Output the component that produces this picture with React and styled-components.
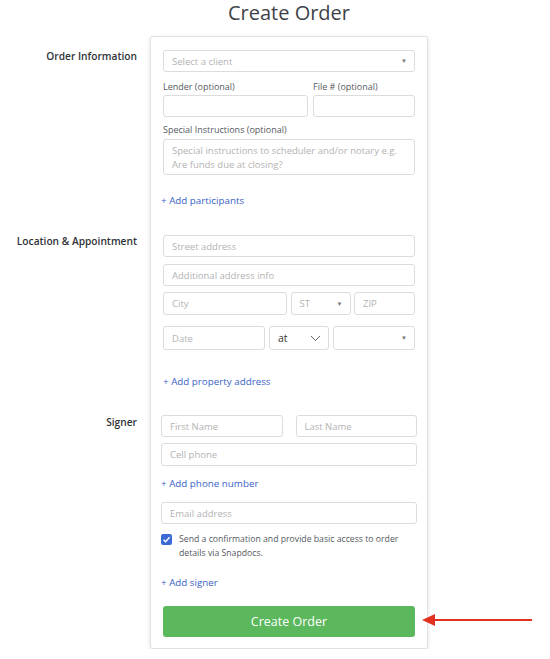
import { styled, createGlobalStyle } from 'styled-components'

const GlobalStyle = createGlobalStyle`
  body {
    margin: 0;
    background: #ffffff;
    font-family: "Open Sans", "Liberation Sans", sans-serif;
    color: #333;
  }
  * { box-sizing: border-box; }
`

const colors = {
  border: '#dcdcdc',
  placeholder: '#b3b3b3',
  link: '#3a5fc6',
  label: '#555a5f',
  green: '#5cb85c',
  blue: '#3d6bd6',
}

const Page = styled.div`
  display: grid;
  grid-template-columns: 150px 278px;
  grid-template-rows: 36px auto auto auto;
  width: 550px;
`
const PageTitle = styled.h1`
  grid-column: 2;
  grid-row: 1;
  margin: 0;
  text-align: center;
  font-size: 20px;
  font-weight: 400;
  line-height: 26px;
  color: #3d4248;
`
const CardBack = styled.div`
  grid-column: 2;
  grid-row: 2 / 5;
  background: #fff;
  border: 1px solid #e2e2e2;
  border-radius: 3px;
  box-shadow: 0 1px 4px rgba(0, 0, 0, 0.12);
`
const SectionLabel = styled.div`
  grid-column: 1;
  grid-row: ${(p) => p.$row};
  padding: ${(p) => p.$top}px 13px 0 0;
  text-align: right;
  font-size: 10.2px;
  font-weight: 600;
  line-height: 14px;
  color: #2f3337;
`
const Section = styled.div`
  grid-column: 2;
  grid-row: ${(p) => p.$row};
  display: flex;
  flex-direction: column;
  align-items: flex-start;
  padding: ${(p) => p.$top}px ${(p) => p.$px}px ${(p) => p.$bottom}px;
  position: relative;
`
const FieldLabel = styled.div`
  font-size: 9px;
  line-height: 14px;
  color: ${colors.label};
  margin-top: ${(p) => p.$mt || 0}px;
`
const Row = styled.div`
  display: flex;
  align-self: stretch;
  gap: ${(p) => p.$gap || 4}px;
  margin-top: ${(p) => p.$mt || 0}px;
`
const Col = styled.div`
  display: flex;
  flex-direction: column;
  width: ${(p) => p.$w ? `${p.$w}px` : 'auto'};
  flex: ${(p) => p.$w ? 'none' : '1'};
`
const Input = styled.input`
  display: block;
  align-self: stretch;
  width: ${(p) => p.$w ? `${p.$w}px` : 'auto'};
  flex: ${(p) => p.$grow ? '1 1 0' : 'none'};
  min-width: 0;
  height: ${(p) => p.$h || 22}px;
  margin: ${(p) => p.$mt || 0}px 0 0;
  padding: 0 8px;
  border: 1px solid ${colors.border};
  border-radius: 3px;
  font-family: inherit;
  font-size: 9.5px;
  color: #333;
  background: #fff;
  &::placeholder { color: ${colors.placeholder}; }
`
const TextArea = styled.textarea`
  display: block;
  align-self: stretch;
  height: 36px;
  margin-top: 2px;
  padding: 4px 8px;
  border: 1px solid ${colors.border};
  border-radius: 3px;
  font-family: inherit;
  font-size: 9.5px;
  line-height: 14px;
  resize: none;
  overflow: hidden;
  &::placeholder { color: ${colors.placeholder}; }
`
const SelectBox = styled.div`
  display: flex;
  align-items: center;
  justify-content: space-between;
  align-self: stretch;
  width: ${(p) => p.$w ? `${p.$w}px` : 'auto'};
  flex: none;
  height: ${(p) => p.$h || 22}px;
  margin-top: ${(p) => p.$mt || 0}px;
  padding: 0 7px 0 8px;
  border: 1px solid ${colors.border};
  border-radius: 3px;
  font-size: ${(p) => p.$dark ? '10.5px' : '9.5px'};
  color: ${(p) => p.$dark ? '#333' : colors.placeholder};
  background: #fff;
`
const Caret = styled.span`
  font-size: 6px;
  color: #777;
`
const AddLink = styled.a`
  font-size: 9.8px;
  line-height: 16px;
  color: ${colors.link};
  text-decoration: none;
  margin-top: ${(p) => p.$mt || 0}px;
  margin-left: ${(p) => p.$ml ?? -2}px;
`
const CheckRow = styled.label`
  display: flex;
  gap: 7px;
  margin-top: 8px;
  font-size: 8.7px;
  line-height: 14px;
  color: ${colors.label};
`
const CheckBox = styled.span`
  flex: none;
  width: 11px;
  height: 11px;
  margin-top: 2px;
  border-radius: 2px;
  background: ${colors.blue};
  display: flex;
  align-items: center;
  justify-content: center;
`
const ButtonRow = styled.div`
  position: relative;
  align-self: stretch;
  margin: 15px 2px 0;
`
const SubmitButton = styled.button`
  display: block;
  width: 100%;
  height: 31px;
  border: none;
  border-radius: 3px;
  background: ${colors.green};
  color: #fff;
  font-family: inherit;
  font-size: 12.5px;
`
const Arrow = styled.svg`
  position: absolute;
  left: calc(100% + 7px);
  top: 7px;
`

function Chevron() {
  return (
    <svg width="11" height="7" viewBox="0 0 11 7">
      <polyline points="1,1 5.5,5.5 10,1" fill="none" stroke="#666" strokeWidth="1" />
    </svg>
  )
}

function CreateOrder() {
  return (
    <Page>
      <PageTitle>Create Order</PageTitle>
      <CardBack />

      <SectionLabel $row={2} $top={13}>Order Information</SectionLabel>
      <Section $row={2} $top={14} $bottom={11} $px={13}>
        <SelectBox>
          <span>Select a client</span>
          <Caret>▼</Caret>
        </SelectBox>
        <Row $gap={5} $mt={8}>
          <Col>
            <FieldLabel>Lender (optional)</FieldLabel>
            <Input $mt={1} />
          </Col>
          <Col $w={102}>
            <FieldLabel>File # (optional)</FieldLabel>
            <Input $mt={1} />
          </Col>
        </Row>
        <FieldLabel $mt={6}>Special Instructions (optional)</FieldLabel>
        <TextArea placeholder={'Special instructions to scheduler and/or notary e.g.\nAre funds due at closing?'} />
        <AddLink $mt={18}>+ Add participants</AddLink>
      </Section>

      <SectionLabel $row={3} $top={14}>Location &amp; Appointment</SectionLabel>
      <Section $row={3} $top={15} $bottom={11} $px={13}>
        <Input placeholder="Street address" />
        <Input placeholder="Additional address info" $mt={7} />
        <Row $gap={3.5} $mt={6}>
          <Input placeholder="City" $h={23} $grow />
          <SelectBox $w={60} $h={23}>
            <span>ST</span>
            <Caret>▼</Caret>
          </SelectBox>
          <Input placeholder="ZIP" $w={61} $h={23} />
        </Row>
        <Row $gap={4} $mt={11}>
          <Input placeholder="Date" $h={24} $grow />
          <SelectBox $w={60} $h={24} $dark>
            <span>at</span>
            <Chevron />
          </SelectBox>
          <SelectBox $w={82} $h={24}>
            <span />
            <Caret>▼</Caret>
          </SelectBox>
        </Row>
        <AddLink $mt={24} $ml={0}>+ Add property address</AddLink>
      </Section>

      <SectionLabel $row={4} $top={14}>Signer</SectionLabel>
      <Section $row={4} $top={14} $bottom={12} $px={11}>
        <Row $gap={13}>
          <Input placeholder="First Name" $grow />
          <Input placeholder="Last Name" $grow />
        </Row>
        <Input placeholder="Cell phone" $mt={6} $h={23} />
        <AddLink $mt={10} $ml={0}>+ Add phone number</AddLink>
        <Input placeholder="Email address" $mt={10} $h={22} />
        <CheckRow>
          <CheckBox>
            <svg width="9" height="9" viewBox="0 0 9 9">
              <polyline points="1.5,4.8 3.6,6.8 7.6,2.2" fill="none" stroke="#fff" strokeWidth="1.4" />
            </svg>
          </CheckBox>
          <span>Send a confirmation and provide basic access to order details via Snapdocs.</span>
        </CheckRow>
        <AddLink $mt={15} $ml={0}>+ Add signer</AddLink>
        <ButtonRow>
          <SubmitButton>Create Order</SubmitButton>
          <Arrow width="112" height="16" viewBox="0 0 112 16">
            <line x1="10" y1="7" x2="110" y2="7" stroke="#e2321f" strokeWidth="2.2" />
            <polygon points="0,7 13,1 13,13" fill="#e2321f" />
          </Arrow>
        </ButtonRow>
      </Section>
    </Page>
  )
}

export default function App() {
  return (
    <>
      <GlobalStyle />
      <CreateOrder />
    </>
  )
}
